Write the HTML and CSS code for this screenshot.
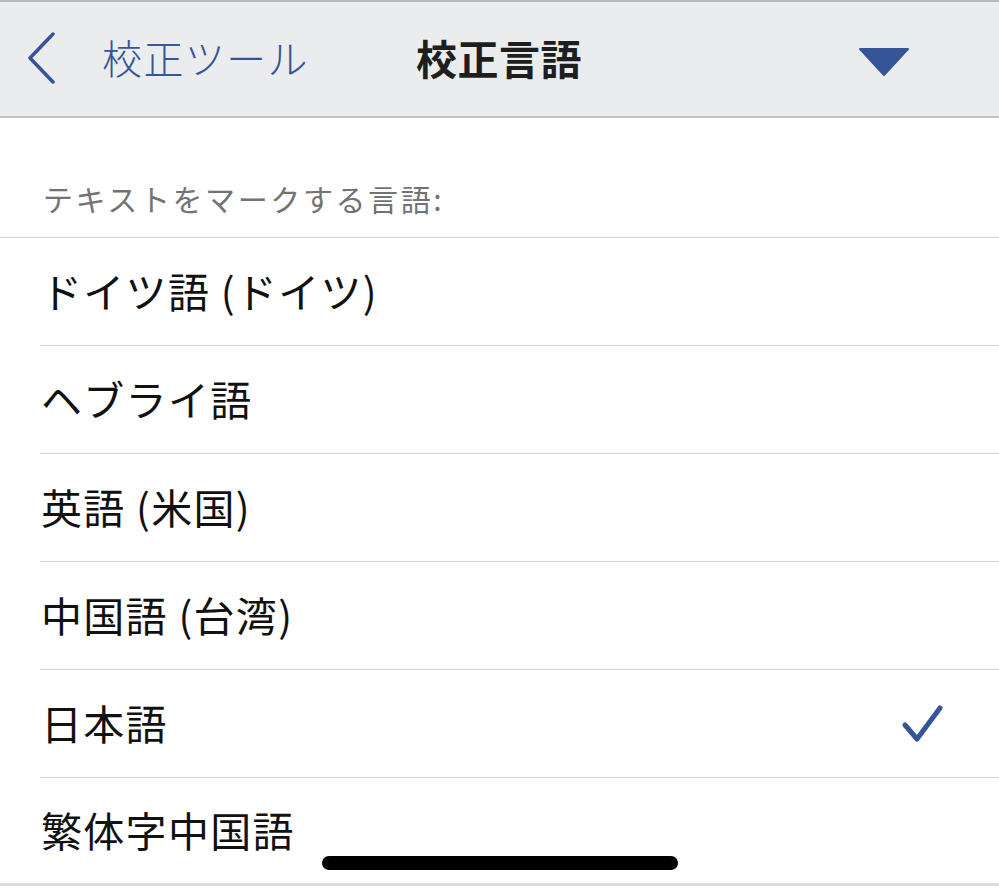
FILE: index.html
```html
<!DOCTYPE html>
<html lang="ja">
<head>
<meta charset="utf-8">
<link rel="stylesheet" href="styles.css">
</head>
<body>
<header class="nav">
  <div class="nav-left">
    <svg class="chev" width="30" height="52" viewBox="0 0 30 52"><path d="M27 2 L4 26 L27 50" fill="none" stroke="#355597" stroke-width="3.5" stroke-linecap="round" stroke-linejoin="round"/></svg>
    <span class="back-label">校正ツール</span>
  </div>
  <h1 class="title">校正言語</h1>
  <svg class="tri" width="50" height="30" viewBox="0 0 50 30"><path d="M1 2 L49 2 L25 28 Z" fill="#355597" stroke="#355597" stroke-width="2" stroke-linejoin="round"/></svg>
</header>
<div class="section-label">テキストをマークする言語:</div>
<ul class="list">
  <li class="row"><span>ドイツ語 (ドイツ)</span></li>
  <li class="row"><span>ヘブライ語</span></li>
  <li class="row"><span>英語 (米国)</span></li>
  <li class="row"><span>中国語 (台湾)</span></li>
  <li class="row"><span>日本語</span>
    <svg class="check" width="44" height="42" viewBox="0 0 44 42"><path d="M4 22 L16 36 L39 5" fill="none" stroke="#355597" stroke-width="5" stroke-linecap="round" stroke-linejoin="round"/></svg>
  </li>
  <li class="row last"><span>繁体字中国語</span></li>
</ul>
<div class="home"></div>
</body>
</html>
```
FILE: styles.css
```css
* { box-sizing: border-box; }
html, body { margin: 0; padding: 0; background: #fff; }
body {
  width: 999px;
  height: 892px;
  overflow: hidden;
  position: relative;
  font-family: "Noto Sans CJK JP", "Noto Sans", sans-serif;
}
.nav {
  height: 118px;
  background: #ebecee;
  border-top: 2px solid #b8b8b8;
  border-bottom: 2px solid #c4c4c6;
  display: flex;
  align-items: center;
  position: relative;
  padding: 0 0 0 26px;
}
.nav-left { display: flex; align-items: center; }
.chev { display: block; margin-top: -2px; }
.back-label {
  margin-left: 46px;
  color: #355597;
  font-size: 40px;
  font-weight: 300;
  letter-spacing: 1.4px;
  line-height: 1;
  margin-top: -4px;
}
.title {
  margin: -4px 0 0 0;
  position: absolute;
  left: 416px;
  font-size: 41px;
  font-weight: 700;
  color: #1e1e1e;
  line-height: 1;
  letter-spacing: 0.5px;
}
.tri { position: absolute; left: 859px; top: 45px; }
.section-label {
  height: 120px;
  padding: 62px 0 0 43px;
  font-size: 30px;
  color: #737373;
  line-height: 36px;
  border-bottom: 1.5px solid #d0d0d2;
  letter-spacing: 2.6px;
}
.list { list-style: none; margin: 0; padding: 0; }
.row {
  height: 108px;
  margin-left: 40px;
  border-bottom: 1.5px solid #d0d0d2;
  display: flex;
  align-items: center;
  justify-content: space-between;
  font-size: 41px;
  color: #111;
  padding-right: 54px;
  letter-spacing: 1.3px;
}
.row span { margin-left: 1px; margin-top: -4px; }
.row.last { margin-left: 0; padding-left: 40px; border-bottom: 3px solid #dcdcdc; }
.check { display: block; }
.home {
  position: absolute;
  left: 322px;
  top: 856px;
  width: 356px;
  height: 14px;
  border-radius: 7px;
  background: #000;
}
```
